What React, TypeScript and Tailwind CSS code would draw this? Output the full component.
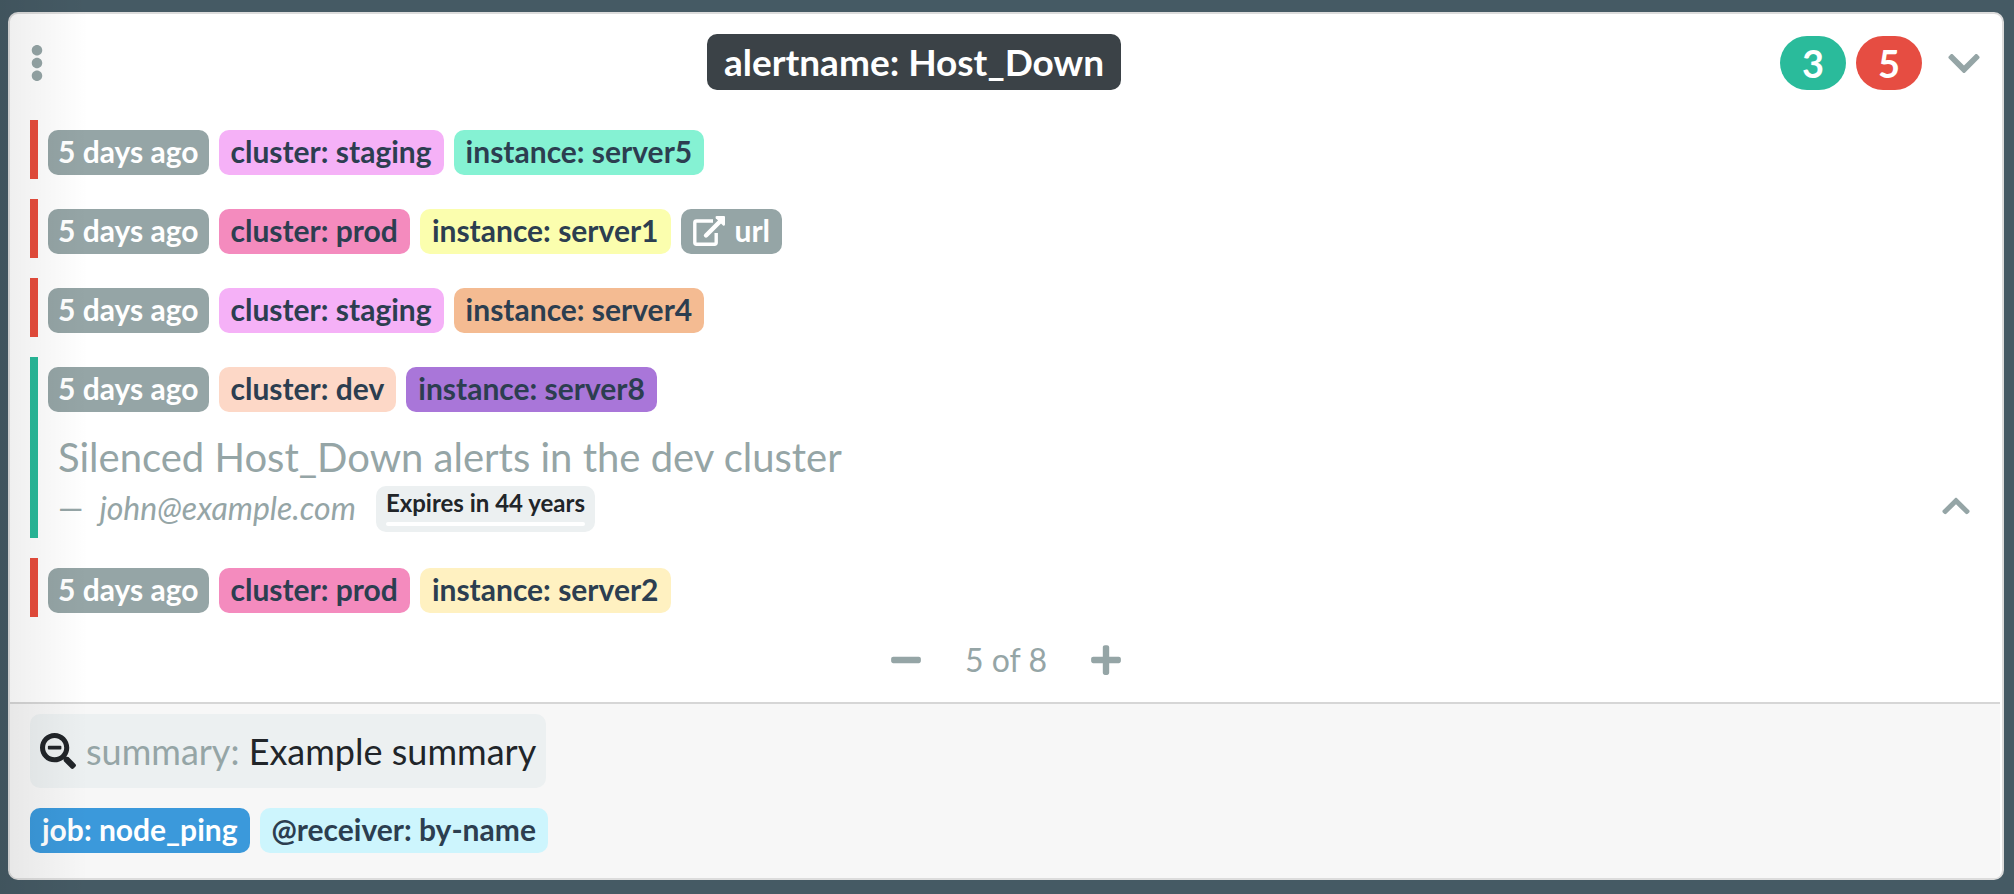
import { FaChevronDown, FaChevronUp, FaEllipsisV, FaMinus, FaPlus, FaSearchMinus } from "react-icons/fa";

type Label = { text: string; color: string };

const STAGING: Label = { text: "cluster: staging", color: "bg-[#f5b1f7]" };
const PROD: Label = { text: "cluster: prod", color: "bg-[#f48bbe]" };
const DEV: Label = { text: "cluster: dev", color: "bg-[#fdd8c7]" };

const LABEL = "h-[45px] rounded-[10px] px-3 pb-0.5 text-[30px] leading-[43px] font-bold whitespace-nowrap";

function LabelButton({ label, tone = "text-[#2c3e50]" }: { label: Label; tone?: string }) {
  return (
    <button type="button" className={`${LABEL} ${label.color} ${tone}`}>
      {label.text}
    </button>
  );
}

function ExternalLinkIcon() {
  return (
    <svg viewBox="0 0 32 32" className="size-8" fill="none" stroke="currentColor" aria-hidden="true">
      <path
        d="M20 6H3.500Q1.800 6 1.800 7.700V27.500Q1.800 29.200 3.500 29.200H21.500Q23.200 29.200 23.200 27.500V18"
        strokeWidth="3.400"
      />
      <path d="M13 20.500L27 6.500" strokeWidth="4.400" strokeLinecap="round" />
      <path
        d="M23.500 1H31Q32 1 32 2V9.500Q31.500 11.500 30 10.500L22.800 3.300Q21.800 1.500 23.500 1Z"
        fill="currentColor"
        stroke="none"
      />
    </svg>
  );
}

function Silence() {
  return (
    <div className="flex items-end justify-between pr-3 pb-0.5 pl-[10px]">
      <div className="text-[#95a5a6]">
        <p className="mt-[22px] text-[40px] leading-[46px]">Silenced Host_Down alerts in the dev cluster</p>
        <div className="mt-1.5 flex items-center">
          <cite className="pb-0.5 text-[32px] leading-[44px]">
            <span className="not-italic">—</span>
            <span className="ml-4">john@example.com</span>
          </cite>
          <div className="ml-5 h-[46px] rounded-[10px] bg-[#ecf0f1] px-[10px] pt-1 text-[24px] leading-[26px] font-bold text-[#212529]">
            Expires in 44 years
            <div className="mt-1.5 h-1 rounded-xs bg-white" />
          </div>
        </div>
      </div>
      <button type="button" aria-label="Hide silence" className="mb-[10px] text-[#95a5a6]">
        <FaChevronUp className="h-8 w-7" />
      </button>
    </div>
  );
}

function Alert({ labels, url = false, silenced = false }: { labels: Label[]; url?: boolean; silenced?: boolean }) {
  return (
    <li className={`border-l-8 pt-[10px] pb-1 pl-[10px] ${silenced ? "border-[#28b999]" : "border-[#e74c3c]"}`}>
      <div className="flex flex-wrap gap-[10px]">
        <span className="h-[45px] rounded-[10px] bg-[#95a5a6] px-[10px] text-[30px] leading-[43px] font-bold whitespace-nowrap text-white">
          5 days ago
        </span>
        {labels.map((label) => (
          <LabelButton key={label.text} label={label} />
        ))}
        {url && (
          <a href="#url" className={`${LABEL} flex items-center gap-[10px] bg-[#95a5a6] text-white`}>
            <ExternalLinkIcon />
            url
          </a>
        )}
      </div>
      {silenced && <Silence />}
    </li>
  );
}

export default function App() {
  return (
    <div className="relative min-h-screen bg-[#455a64] pt-3 pr-[10px] pb-[14px] pl-2 font-[Lato,sans-serif] text-[#212529]">
      <section className="overflow-hidden rounded-[10px] border-2 border-[#dcdcdc] bg-white">
        <header className="flex items-end pt-5 pr-[22px] pb-[30px] pl-5">
          <button type="button" aria-label="Group menu" className="h-[54px] pr-1 text-[#95a5a6]">
            <FaEllipsisV className="h-[38px] w-[14px]" />
          </button>
          <div className="flex flex-1 justify-center">
            <button
              type="button"
              className="h-14 rounded-[10px] bg-[#3b4247] px-[17px] text-[37px] leading-[56px] font-bold text-white"
            >
              alertname: Host_Down
            </button>
          </div>
          <div className="flex items-center gap-[10px]">
            <button type="button" className="h-[54px] w-[66px] rounded-full bg-[#2abb9b] text-[38px] leading-[54px] font-bold text-white">
              3
            </button>
            <button type="button" className="h-[54px] w-[66px] rounded-full bg-[#e64d42] text-[38px] leading-[54px] font-bold text-white">
              5
            </button>
            <button type="button" aria-label="Collapse group" className="ml-4 text-[#95a5a6]">
              <FaChevronDown className="h-[37px] w-8" />
            </button>
          </div>
        </header>

        <ul className="flex flex-col gap-5 px-5">
          <Alert labels={[STAGING, { text: "instance: server5", color: "bg-[#85f2d3]" }]} />
          <Alert labels={[PROD, { text: "instance: server1", color: "bg-[#fbfeae]" }]} url />
          <Alert labels={[STAGING, { text: "instance: server4", color: "bg-[#f4bb92]" }]} />
          <Alert labels={[DEV, { text: "instance: server8", color: "bg-[#a976d9]" }]} silenced />
          <Alert labels={[PROD, { text: "instance: server2", color: "bg-[#fff1c1]" }]} />
        </ul>

        <div className="flex items-center justify-center gap-11 py-5 text-[#95a5a6]">
          <button type="button" aria-label="Show fewer alerts">
            <FaMinus className="h-[34px] w-[30px]" />
          </button>
          <span className="text-[32px] leading-[45px]">5 of 8</span>
          <button type="button" aria-label="Show more alerts">
            <FaPlus className="h-[34px] w-[30px]" />
          </button>
        </div>

        <footer className="mr-0.5 border-t-2 border-[#d6d6d6] bg-[#f7f7f7] px-5 pt-[10px] pb-[25px]">
          <button type="button" className="flex h-[74px] items-center gap-[10px] rounded-[10px] bg-[#ecf0f1] px-[10px] text-[36px]">
            <FaSearchMinus className="size-9" />
            <span>
              <span className="text-[#95a5a6]">summary:</span> Example summary
            </span>
          </button>
          <div className="mt-5 flex gap-[10px]">
            <LabelButton label={{ text: "job: node_ping", color: "bg-[#3b99db]" }} tone="text-white" />
            <LabelButton label={{ text: "@receiver: by-name", color: "bg-[#cdf5fd]" }} />
          </div>
        </footer>
      </section>
      <div className="pointer-events-none absolute inset-y-0 left-0 w-[88px] bg-linear-to-r from-black/7 to-transparent" />
    </div>
  );
}
